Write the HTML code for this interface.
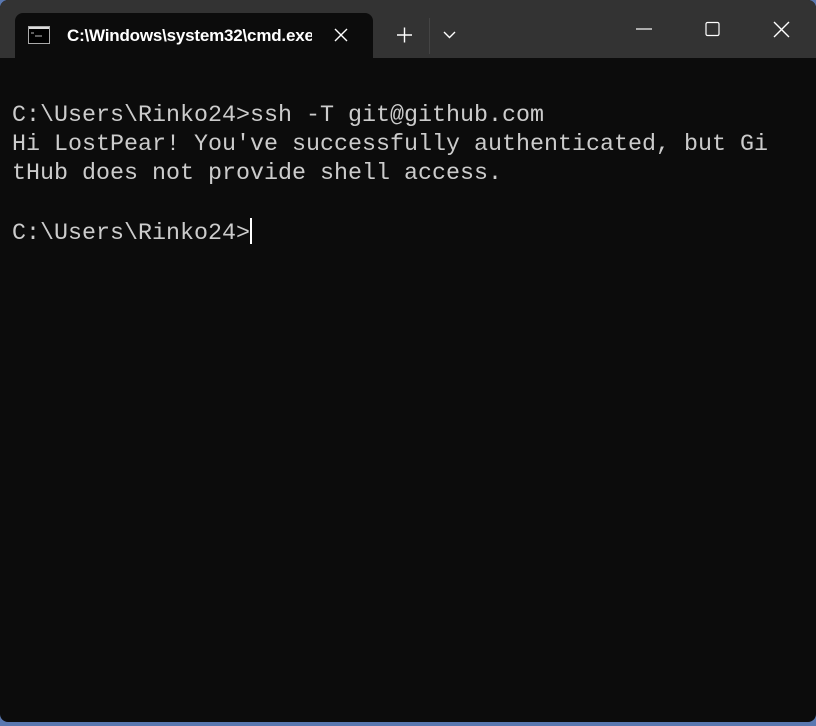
<!DOCTYPE html>
<html><head><style>
html,body{margin:0;padding:0;width:816px;height:726px;overflow:hidden;background:#5a78b0;}
.win{position:absolute;left:0;top:0;width:816px;height:722px;background:#0c0c0c;border-radius:8px;overflow:hidden;}
.bar{position:absolute;left:0;top:0;width:816px;height:58px;background:#333333;}
.tab{position:absolute;left:15px;top:13px;width:358px;height:46px;background:#0c0c0c;border-radius:8px 8px 0 0;}
.ttl{position:absolute;left:67px;top:26px;width:245px;overflow:hidden;white-space:nowrap;color:#fff;font:bold 17px "Liberation Sans",sans-serif;letter-spacing:-0.2px;}
.term{position:absolute;left:12px;top:102px;color:#cccccc;font:23.33px/29px "Liberation Mono",monospace;white-space:pre;}
.cur{display:inline-block;width:2px;height:26px;background:#fff;vertical-align:-5px;}
</style></head><body>
<div class="win">
<div class="bar"></div>
<div class="tab"></div>
<svg style="position:absolute;left:0;top:0" width="816" height="58">
<rect x="28.5" y="26.5" width="21" height="17" fill="#000" stroke="#aaa" stroke-width="1"/>
<rect x="29" y="27" width="20" height="2" fill="#ddd"/>
<path d="M31 33h3M35 36h7" stroke="#bbb" stroke-width="1"/>
<path d="M335 29l12 12M347 29l-12 12" stroke="#fff" stroke-width="1.4"/>
<path d="M397 35h15M404.5 27.5v15" stroke="#fff" stroke-width="1.4"/>
<path d="M429.5 18v36" stroke="#444" stroke-width="1"/>
<path d="M444 32l5.5 5.5 5.5-5.5" stroke="#fff" stroke-width="1.4" fill="none"/>
<path d="M636 29h16" stroke="#fff" stroke-width="1.2"/>
<rect x="706" y="22.5" width="13" height="13" rx="1.5" fill="none" stroke="#fff" stroke-width="1.2"/>
<path d="M774 22l15 15M789 22l-15 15" stroke="#fff" stroke-width="1.4"/>
</svg>
<div class="ttl">C:\Windows\system32\cmd.exe</div>
<div class="term">C:\Users\Rinko24&gt;ssh -T git@github.com
Hi LostPear! You've successfully authenticated, but Gi
tHub does not provide shell access.

C:\Users\Rinko24&gt;<span class="cur"></span></div>
</div>
</body></html>
